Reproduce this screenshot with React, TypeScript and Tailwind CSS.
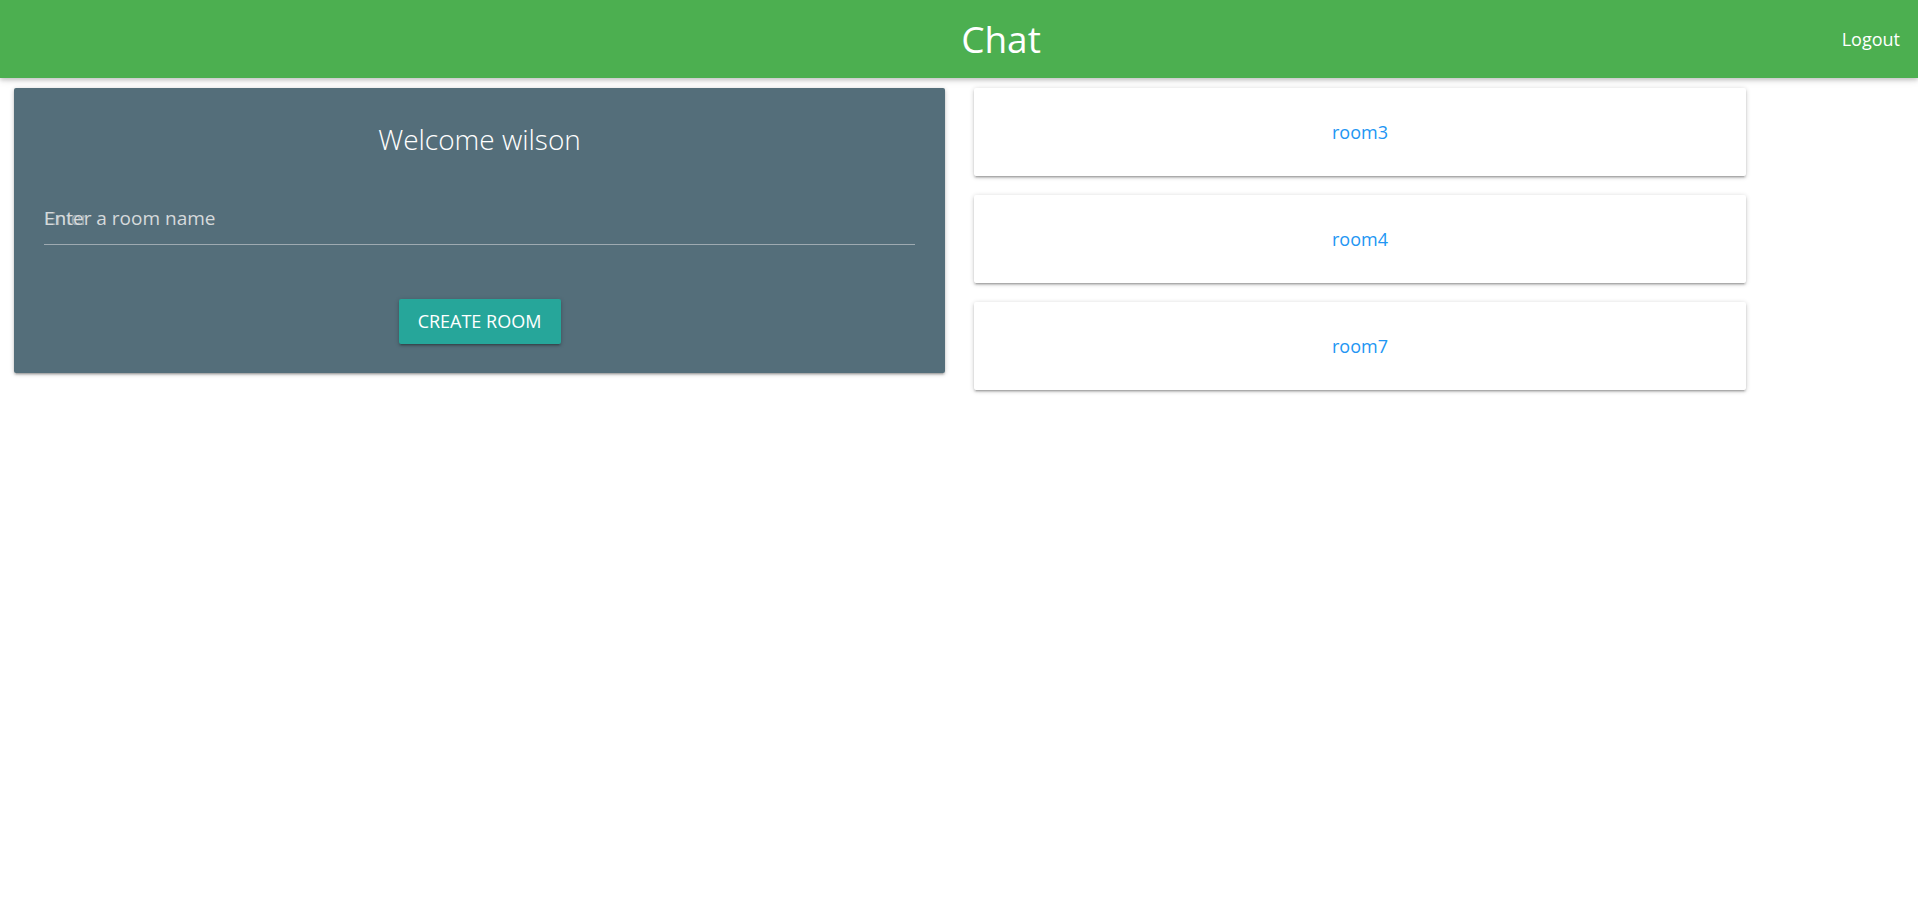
import React from "react";

export default function App() {
  const rooms = ["room3", "room4", "room7"];
  const cardShadow =
    "shadow-[0_2px_2px_0_rgba(0,0,0,0.14),0_3px_1px_-2px_rgba(0,0,0,0.12),0_1px_5px_0_rgba(0,0,0,0.2)]";
  return (
    <div className="min-h-[908px] bg-white" style={{ fontFamily: '"Open Sans", "Noto Sans", sans-serif' }}>
      <header className="relative h-[78px] bg-[#4caf50] flex items-center justify-center pl-[84px] shadow-[0_2px_4px_0_rgba(0,0,0,0.16),0_2px_8px_0_rgba(0,0,0,0.12)] z-10">
        <div className="text-white text-[37px] leading-none pb-[2px]">Chat</div>
        <a className="absolute right-[18px] top-[30px] text-white text-[18px] leading-none">Logout</a>
      </header>
      <main className="flex items-start pt-[10px] pl-[14px] gap-[29px]">
        <section className={`w-[931px] h-[285px] bg-[#546e7a] rounded-[2px] ${cardShadow} px-[30px] pt-[33px] flex flex-col`}>
          <h2 className="text-center text-white text-[28px] font-light leading-[36px]">Welcome wilson</h2>
          <div className="relative mt-[42px] h-[46px] border-b border-[#9eaab1]">
            <span
              className="absolute left-0 top-[7px] text-[18px] text-[#a9b3b8] opacity-80"
              style={{ fontFamily: '"Liberation Sans", sans-serif' }}
            >
              Enter
            </span>
            <input
              className="relative w-full h-full pb-[8px] bg-transparent outline-none text-[19px] text-white placeholder:text-[#d6dadc]"
              placeholder="Enter a room name"
            />
          </div>
          <div className="flex justify-center mt-[54px]">
            <button className={`w-[162px] h-[45px] bg-[#26a69a] text-white text-[18px] uppercase rounded-[2px] ${cardShadow}`}>
              Create Room
            </button>
          </div>
        </section>
        <section className="w-[772px] flex flex-col gap-[19px]">
          {rooms.map((r) => (
            <div key={r} className={`h-[88px] bg-white rounded-[2px] flex items-center justify-center ${cardShadow}`}>
              <a className="text-[#2196f3] text-[18px] leading-none">{r}</a>
            </div>
          ))}
        </section>
      </main>
    </div>
  );
}
